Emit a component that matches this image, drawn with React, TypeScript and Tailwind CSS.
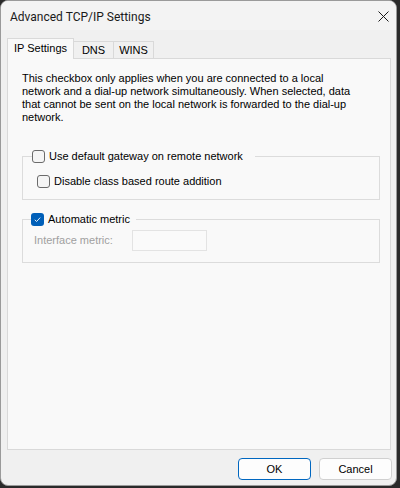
import React from "react";

const ui = "font-['Liberation_Sans',Arial,sans-serif] text-[11px] leading-[13px]";

function Check({ checked }: { checked?: boolean }) {
    if (checked) {
        return (
            <span className="inline-flex items-center justify-center w-[13px] h-[13px] rounded-[3px] bg-[#005fb8] shrink-0">
                <svg width="9" height="9" viewBox="0 0 9 9" fill="none">
                    <path d="M1.8 4.8 L3.6 6.5 L7.2 2.6" stroke="#ffffff" strokeWidth="0.9" />
                </svg>
            </span>
        );
    }
    return <span className="inline-block w-[13px] h-[13px] rounded-[3px] border border-[#6b6b6b] bg-[#f5f5f5] shrink-0" />;
}

export default function App() {
    return (
        <div className="w-[400px] h-[488px] bg-[#2a2a2a] overflow-hidden">
            <div className="w-[397px] h-[486px] rounded-[8px] border border-[#9a9a9a] bg-[#f0f0f0] flex flex-col overflow-hidden">
                {/* Title bar */}
                <div className="h-[29px] bg-[#f3f3f3] flex items-center justify-between pl-[9px] pr-[7px]">
                    <span className="font-['Segoe_UI',Roboto,sans-serif] text-[12px] text-[#1a1a1a] pt-[2px]">
                        Advanced TCP/IP Settings
                    </span>
                    <svg width="11" height="11" viewBox="0 0 11 11" className="mt-[1px]">
                        <path d="M0.5 0.5 L10.5 10.5 M10.5 0.5 L0.5 10.5" stroke="#1a1a1a" strokeWidth="1" />
                    </svg>
                </div>

                {/* Body */}
                <div className={`flex-1 flex flex-col pt-[8px] ${ui} text-black`}>
                    {/* Tabs */}
                    <div className="flex items-end h-[21px] ml-[6px] -mb-px relative z-10">
                        <div className="h-[21px] w-[67px] bg-[#f9f9f9] border border-b-0 border-[#d9d9d9] flex items-center justify-center pb-[1px]">
                            IP Settings
                        </div>
                        <div className="h-[18px] w-[40px] border border-l-0 border-[#d9d9d9] flex items-center justify-center">
                            DNS
                        </div>
                        <div className="h-[18px] w-[40px] border border-l-0 border-[#d9d9d9] flex items-center justify-center">
                            WINS
                        </div>
                    </div>

                    {/* Panel */}
                    <div className="ml-[6px] w-[384px] flex-1 bg-[#f9f9f9] border border-[#d9d9d9] pt-[13px] pl-[14px] pr-[10px]">
                        <p>
                            This checkbox only applies when you are connected to a local<br />
                            network and a dial-up network simultaneously. When selected, data<br />
                            that cannot be sent on the local network is forwarded to the dial-up<br />
                            network.
                        </p>

                        <fieldset className="mt-[26px] w-[358px] border border-[#dcdcdc] pl-[9px] pb-[11px]">
                            <legend className="flex items-center gap-[4px] pr-[12px] h-[13px]">
                                <Check />
                                <span>Use default gateway on remote network</span>
                            </legend>
                            <div className="flex items-center gap-[4px] pl-[5px] pt-[12px]">
                                <Check />
                                <span>Disable class based route addition</span>
                            </div>
                        </fieldset>

                        <fieldset className="mt-[13px] w-[358px] border border-[#dcdcdc] pl-[8px] pb-[11px]">
                            <legend className="flex items-center gap-[4px] pr-[6px] h-[13px]">
                                <Check checked />
                                <span>Automatic metric</span>
                            </legend>
                            <div className="flex items-center pl-[3px] pt-[4px]">
                                <span className="w-[98px] text-[#a0a0a0]">Interface metric:</span>
                                <span className="w-[75px] h-[21px] border border-[#e3e3e3] bg-[#fafafa]" />
                            </div>
                        </fieldset>
                    </div>

                    {/* Buttons */}
                    <div className="flex justify-end gap-[8px] pt-[8px] pb-[5px] pr-[4px]">
                        <button className="w-[73px] h-[22px] rounded-[4px] border border-[#0067c0] bg-[#fdfdfd] text-black">
                            OK
                        </button>
                        <button className="w-[73px] h-[22px] rounded-[4px] border border-[#d0d0d0] bg-[#fdfdfd] text-black">
                            Cancel
                        </button>
                    </div>
                </div>
            </div>
        </div>
    );
}
